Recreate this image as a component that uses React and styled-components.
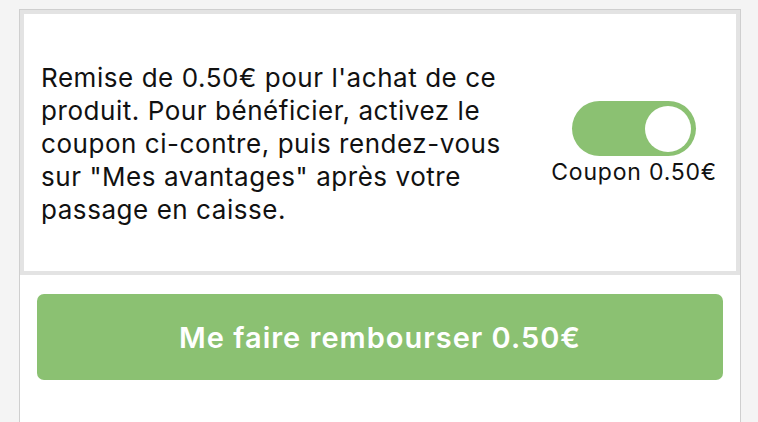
import React, { useState } from 'react';
import styled, { createGlobalStyle } from 'styled-components';

const GlobalStyle = createGlobalStyle`
  html, body {
    margin: 0;
    padding: 0;
    background: #f4f4f4;
    font-family: Inter, "Liberation Sans", Arial, sans-serif;
    color: #111;
  }
`;

const Page = styled.div`
  padding-top: 9px;
  height: 413px;
  overflow: hidden;
`;

const Column = styled.div`
  width: 720px;
  margin-left: 19px;
  min-height: 440px;
  background: #fff;
  border: 1px solid #cfcfcf;
  border-bottom: none;
`;

const CouponCard = styled.section`
  display: flex;
  align-items: center;
  height: 257px;
  border: 4px solid #e3e3e3;
  padding: 0 19px 0 17px;
`;

const Description = styled.p`
  flex: 0 0 476px;
  margin: 0;
  padding-top: 2px;
  font-size: 26px;
  line-height: 33px;
  letter-spacing: 0.55px;
`;

const ToggleBlock = styled.div`
  display: flex;
  flex-direction: column;
  align-items: center;
  margin-left: auto;
  gap: 3px;
`;

const Switch = styled.button`
  position: relative;
  width: 124px;
  height: 55px;
  border: none;
  border-radius: 28px;
  padding: 0;
  background: ${p => (p.$on ? '#8bc172' : '#d8d8d8')};
  cursor: pointer;

  &::after {
    content: '';
    position: absolute;
    top: 5px;
    left: ${p => (p.$on ? '73px' : '5px')};
    width: 46px;
    height: 46px;
    border-radius: 50%;
    background: #fff;
  }
`;

const ToggleLabel = styled.span`
  font-size: 23px;
  line-height: 26px;
  letter-spacing: 0.8px;
`;

const RefundButton = styled.button`
  display: block;
  width: 686px;
  height: 86px;
  margin: 19px 0 0 17px;
  border: none;
  border-radius: 7px;
  background: #8bc172;
  color: #fff;
  font-family: Inter, "Liberation Sans", Arial, sans-serif;
  font-size: 29px;
  font-weight: 600;
  letter-spacing: 1px;
  cursor: pointer;
`;

export default function App() {
  const [active, setActive] = useState(true);

  return (
    <>
      <GlobalStyle />
      <Page>
        <Column>
          <CouponCard>
            <Description>
              Remise de 0.50€ pour l'achat de ce produit. Pour bénéficier, activez le coupon ci-contre, puis rendez-vous sur "Mes avantages" après votre passage en caisse.
            </Description>
            <ToggleBlock>
              <Switch type='button' $on={active} onClick={() => setActive(!active)} aria-label='Coupon' />
              <ToggleLabel>Coupon 0.50€</ToggleLabel>
            </ToggleBlock>
          </CouponCard>
          <RefundButton type='button'>Me faire rembourser 0.50€</RefundButton>
        </Column>
      </Page>
    </>
  );
}
